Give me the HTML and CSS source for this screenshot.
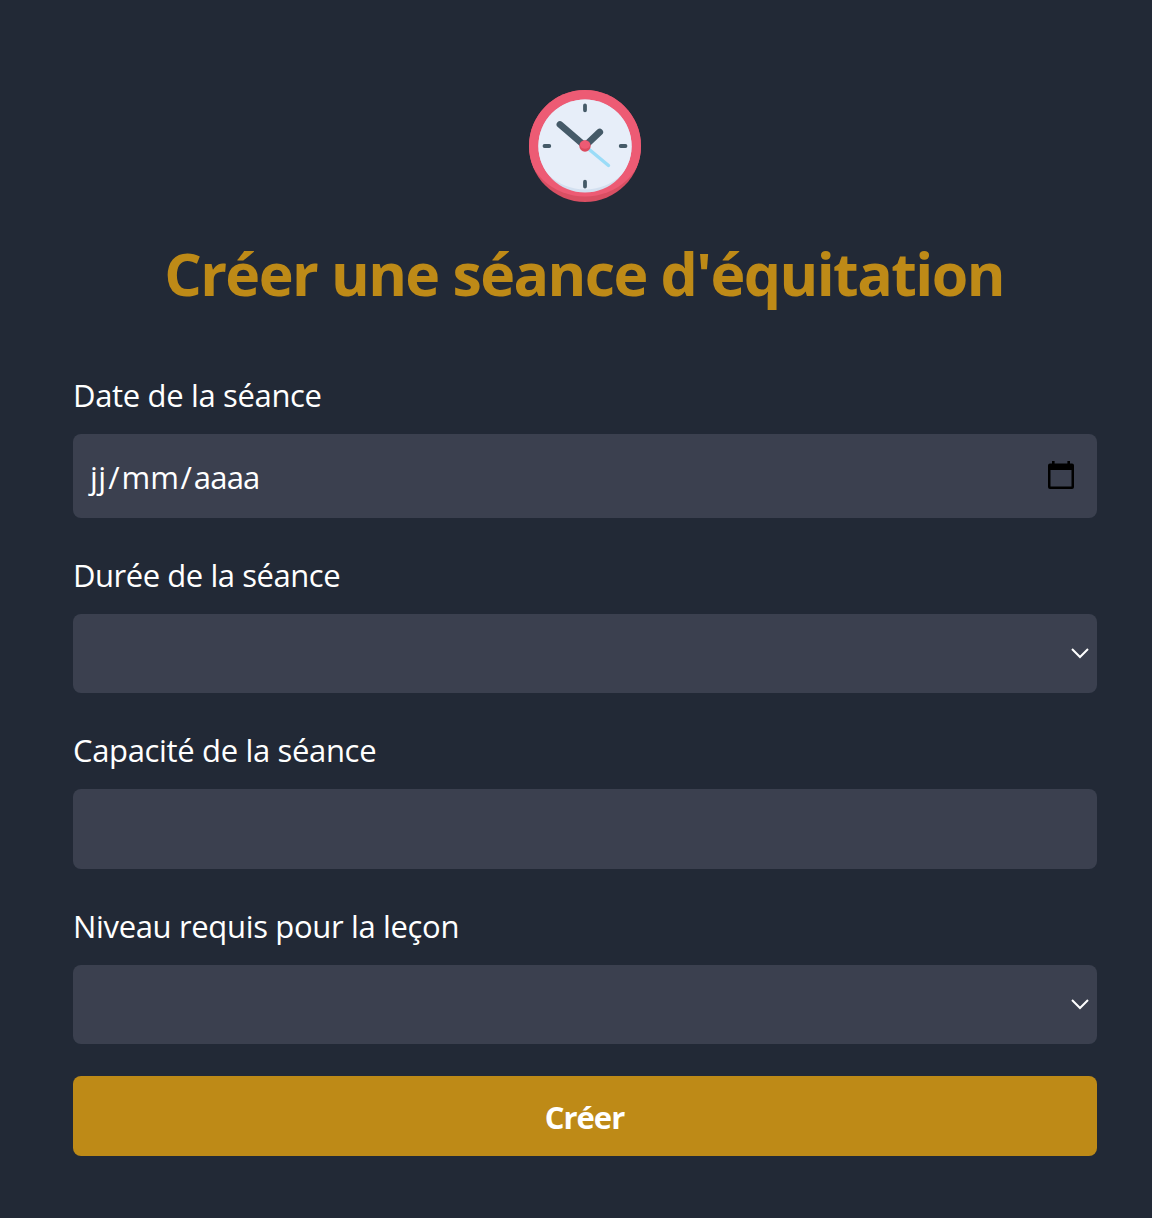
FILE: index.html
```html
<!DOCTYPE html>
<html lang="fr">
<head>
<meta charset="utf-8">
<title>Créer une séance d'équitation</title>
<link rel="stylesheet" href="styles.css">
</head>
<body>
<main class="page">
  <svg class="clock" viewBox="0 0 112 112" aria-hidden="true">
    <defs><clipPath id="rim"><circle cx="56" cy="56" r="56"/></clipPath><clipPath id="face"><circle cx="56" cy="56" r="46.6"/></clipPath></defs>
    <circle cx="56" cy="56" r="56" fill="#d94f63"/>
    <ellipse cx="56" cy="51" rx="59" ry="55.5" fill="#ed5b74" clip-path="url(#rim)"/>
    <circle cx="56" cy="56" r="46.6" fill="#d3e0f0"/>
    <ellipse cx="56" cy="51" rx="51" ry="48.5" fill="#e7eef9" clip-path="url(#face)"/>
    <g fill="none" stroke="#455a68" stroke-linecap="round" stroke-width="3.8">
      <path d="M56 15.5v4.8M56 91.7v4.8M15.5 56h4.8M91.7 56h4.8"/>
      <path stroke-width="6.8" d="M31 34.5L56 56L70.7 42"/>
    </g>
    <path d="M56 56L79.5 75.5" fill="none" stroke="#9bdcf8" stroke-width="3.4" stroke-linecap="round"/>
    <circle cx="56" cy="56" r="5.7" fill="#dc4a5e"/>
    <ellipse cx="56" cy="54.6" rx="5.1" ry="4.1" fill="#ed5b74"/>
  </svg>
  <h1 class="title">Créer une séance d'équitation</h1>
  <form class="form">
    <div class="field">
      <label class="label label-date">Date de la séance</label>
      <div class="control control-date">
        <div class="date-edit" tabindex="0"><span class="day">jj</span><span class="slash">/</span><span class="month">mm</span><span class="slash">/</span><span class="year">aaaa</span></div>
        <svg class="calendar" viewBox="0 0 26 28" aria-hidden="true"><path fill="#000" fill-rule="evenodd" d="M4 0h2.6v2.5h12.8V0H22v2.5h2a2 2 0 0 1 2 2V26a2 2 0 0 1-2 2H2a2 2 0 0 1-2-2V4.500a2 2 0 0 1 2-2h2zM2.500 9v16.500h21V9z"/></svg>
      </div>
    </div>
    <div class="field">
      <label class="label label-duration" for="duration">Durée de la séance</label>
      <div class="control control-select">
        <select class="input" id="duration"><option></option></select>
        <svg class="chevron" viewBox="0 0 18 11" aria-hidden="true"><path d="M1 1l8 8 8-8" fill="none" stroke="#fff" stroke-width="2"/></svg>
      </div>
    </div>
    <div class="field">
      <label class="label" for="capacity">Capacité de la séance</label>
      <div class="control">
        <input class="input" id="capacity" type="text">
      </div>
    </div>
    <div class="field">
      <label class="label" for="level">Niveau requis pour la leçon</label>
      <div class="control control-select">
        <select class="input" id="level"><option></option></select>
        <svg class="chevron" viewBox="0 0 18 11" aria-hidden="true"><path d="M1 1l8 8 8-8" fill="none" stroke="#fff" stroke-width="2"/></svg>
      </div>
    </div>
    <button class="submit" type="button">Créer</button>
  </form>
</main>
</body>
</html>
```
FILE: styles.css
```css
* { box-sizing: border-box; }

body {
  margin: 0;
  min-height: 1218px;
  background: #222936;
  color: #fff;
  font-family: "Segoe UI", "Open Sans", "Noto Sans", sans-serif;
  font-size: 31px;
}

.page {
  display: flex;
  flex-direction: column;
  padding: 90px 55px 62px 73px;
}

.clock {
  width: 112px;
  height: 112px;
  align-self: center;
}

.title {
  margin: 35px 0 62px;
  padding-right: 2px;
  color: #be8a17;
  font-size: 59px;
  font-weight: 700;
  letter-spacing: -1.57px;
  line-height: 72px;
  text-align: center;
  white-space: nowrap;
}

.form {
  display: flex;
  flex-direction: column;
  gap: 33px;
}

.field {
  display: flex;
  flex-direction: column;
  gap: 15px;
}

.label {
  align-self: flex-start;
  letter-spacing: -.34px;
  line-height: 48px;
  white-space: nowrap;
}

.label-duration { letter-spacing: -.45px; }

.control {
  display: flex;
  align-items: center;
  height: 80px;
  border-radius: 8px;
  background: #3b404f;
}

.control-date {
  height: 84px;
  padding: 0 23px 0 17px;
}

.control-select {
  height: 79px;
  padding-right: 8px;
}

.input {
  flex: 1;
  min-width: 0;
  height: 100%;
  margin: 0;
  padding: 0;
  border: 0;
  outline: 0;
  appearance: none;
  background: transparent;
  color: inherit;
  font: inherit;
}

.date-edit {
  display: flex;
  flex: 1;
  padding-top: 2px;
  outline: 0;
}

.day { letter-spacing: .5px; }

.slash { padding: 0 2px 0 1.5px; }

.slash + .year { letter-spacing: -.8px; }

.calendar {
  width: 26px;
  height: 28px;
  margin-bottom: 2px;
}

.chevron {
  width: 18px;
  height: 11px;
}

.submit {
  height: 80px;
  margin-top: -1px;
  padding: 2px 1px 0 0;
  border: 0;
  border-radius: 8px;
  background: #be8a17;
  color: #fff;
  font: inherit;
  font-weight: 700;
  letter-spacing: -1px;
}
```
